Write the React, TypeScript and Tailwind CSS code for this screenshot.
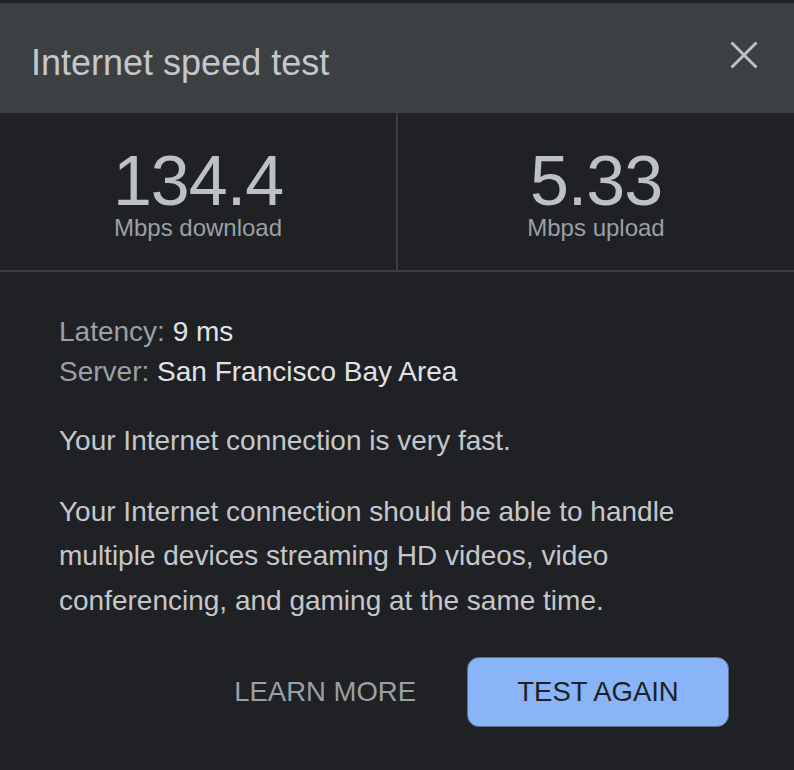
import React from 'react';

const font = { fontFamily: '"Liberation Sans", Arial, sans-serif' };

const Stat: React.FC<{ value: string; label: string }> = ({ value, label }) => (
    <div className="flex-1 flex flex-col items-center pt-[33px]">
        <span className="text-[70px] leading-[70px] tracking-[-1px] text-[#bdc1c6]">{value}</span>
        <span className="text-[24px] leading-[24px] text-[#9aa0a6]">{label}</span>
    </div>
);

export default function App() {
    return (
        <div className="w-[794px] h-[770px] bg-[#202124] pt-[3px] overflow-hidden" style={font}>
            <div className="h-[110px] bg-[#3c4043] flex items-start justify-between pl-[31px] pr-[36px] pt-[38px]">
                <h1 className="mt-[4px] text-[36px] leading-[36px] text-[#c4c7cb]">Internet speed test</h1>
                <svg width="28" height="28" viewBox="0 0 28 28" className="text-[#bdc1c6]">
                    <path d="M1.5 1.5 L26.5 26.5 M26.5 1.5 L1.5 26.5" stroke="currentColor" strokeWidth="3" strokeLinecap="butt" />
                </svg>
            </div>

            <div className="flex h-[157px] border-b-2 border-[#3c4043] box-content">
                <Stat value="134.4" label="Mbps download" />
                <div className="w-[2px] bg-[#3c4043]" />
                <Stat value="5.33" label="Mbps upload" />
            </div>

            <div className="px-[59px] pt-[40px] text-[28px]">
                <div className="leading-[40px]">
                    <p><span className="text-[#9aa0a6]">Latency:</span> <span className="text-[#e0e2e5]">9 ms</span></p>
                    <p><span className="text-[#9aa0a6]">Server:</span> <span className="text-[#e0e2e5]">San Francisco Bay Area</span></p>
                </div>
                <p className="mt-[27px] leading-[44.5px] text-[#c4c7cb]">Your Internet connection is very fast.</p>
                <p className="mt-[26px] leading-[44.5px] text-[#c4c7cb]">
                    Your Internet connection should be able to handle multiple devices streaming HD videos, video conferencing, and gaming at the same time.
                </p>
            </div>

            <div className="flex justify-end items-center gap-[51px] pr-[65px] mt-[34px]">
                <button className="text-[27.5px] leading-none text-[#9aa0a6]">LEARN MORE</button>
                <button className="w-[262px] h-[70px] rounded-[12px] bg-[#8ab4f8] border border-[#5f6f8a] text-[27.5px] leading-none text-[#202124]">
                    TEST AGAIN
                </button>
            </div>
        </div>
    );
}
